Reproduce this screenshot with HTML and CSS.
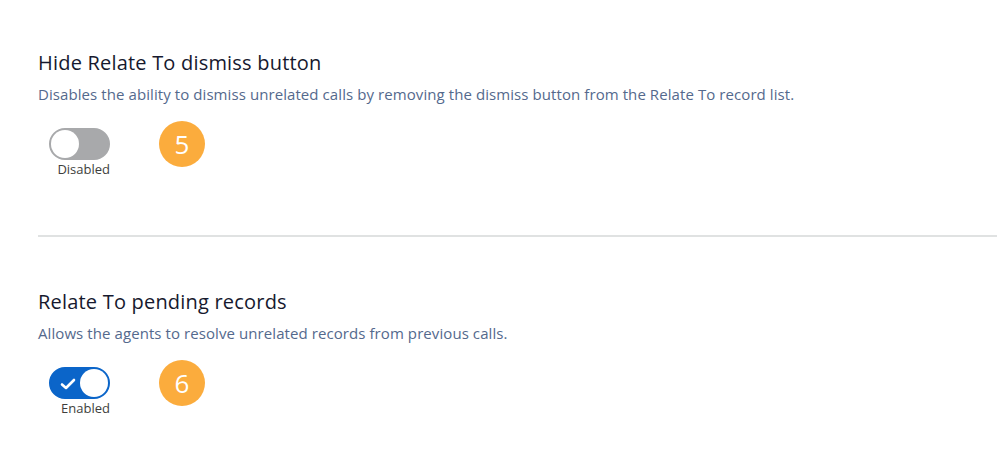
FILE: index.html
```html
<!DOCTYPE html>
<html>
<head>
<meta charset="utf-8">
<link rel="stylesheet" href="styles.css">
</head>
<body>
<div class="page">
  <section class="setting first">
    <h2 class="title">Hide Relate To dismiss button</h2>
    <p class="desc">Disables the ability to dismiss unrelated calls by removing the dismiss button from the Relate To record list.</p>
    <div class="controls">
      <div class="toggle-wrap">
        <div class="toggle off"><span class="knob"></span></div>
        <div class="toggle-label">Disabled</div>
      </div>
      <div class="badge">5</div>
    </div>
  </section>
  <hr class="divider">
  <section class="setting second">
    <h2 class="title">Relate To pending records</h2>
    <p class="desc">Allows the agents to resolve unrelated records from previous calls.</p>
    <div class="controls">
      <div class="toggle-wrap">
        <div class="toggle on">
          <svg class="check" width="16" height="12" viewBox="0 0 16 12"><path d="M2 6.5 L6 10 L14 2" fill="none" stroke="#fff" stroke-width="2.6" stroke-linecap="round" stroke-linejoin="round"/></svg>
          <span class="knob"></span>
        </div>
        <div class="toggle-label">Enabled</div>
      </div>
      <div class="badge">6</div>
    </div>
  </section>
</div>
</body>
</html>
```
FILE: styles.css
```css
* { box-sizing: border-box; }
html, body { margin: 0; padding: 0; background: #fff; }
body { font-family: "Open Sans", "Liberation Sans", sans-serif; }
.page { padding-left: 38px; }
.setting { display: flex; flex-direction: column; }
.setting.first { padding-top: 50px; }
.setting.second { padding-top: 52px; }
.title {
  margin: 0;
  font-size: 20px;
  font-weight: 400;
  line-height: 26px;
  letter-spacing: 0.2px;
  color: #16192e;
}
.desc {
  margin: 8px 0 0;
  font-size: 15px;
  line-height: 20px;
  letter-spacing: 0.08px;
  color: #54698d;
}
.controls {
  display: flex;
  align-items: flex-start;
  gap: 49px;
  margin-top: 24px;
  padding-left: 11px;
}
.toggle-wrap { display: flex; flex-direction: column; align-items: flex-end; width: 61px; }
.toggle {
  position: relative;
  width: 61px;
  height: 32px;
  border-radius: 16px;
  display: flex;
  align-items: center;
}
.toggle.off { background: #a8a9ab; border: 2px solid #a8a9ab; }
.toggle.on { background: #0b65c9; border: 2px solid #0b65c9; justify-content: flex-end; }
.knob {
  width: 28px;
  height: 28px;
  border-radius: 50%;
  background: #fff;
}
.check { position: absolute; left: 9px; top: 9px; }
.toggle-label {
  margin-top: 1px;
  font-size: 13px;
  line-height: 16px;
  color: #3e3e3c;
}
.badge {
  width: 46px;
  height: 46px;
  border-radius: 50%;
  background: #fbac3d;
  color: #fff;
  font-size: 26px;
  display: flex;
  align-items: center;
  justify-content: center;
  margin-top: -7px;
}
.divider {
  margin: 58px 0 0;
  border: 0;
  border-top: 2px solid #e0e2e2;
}
```
